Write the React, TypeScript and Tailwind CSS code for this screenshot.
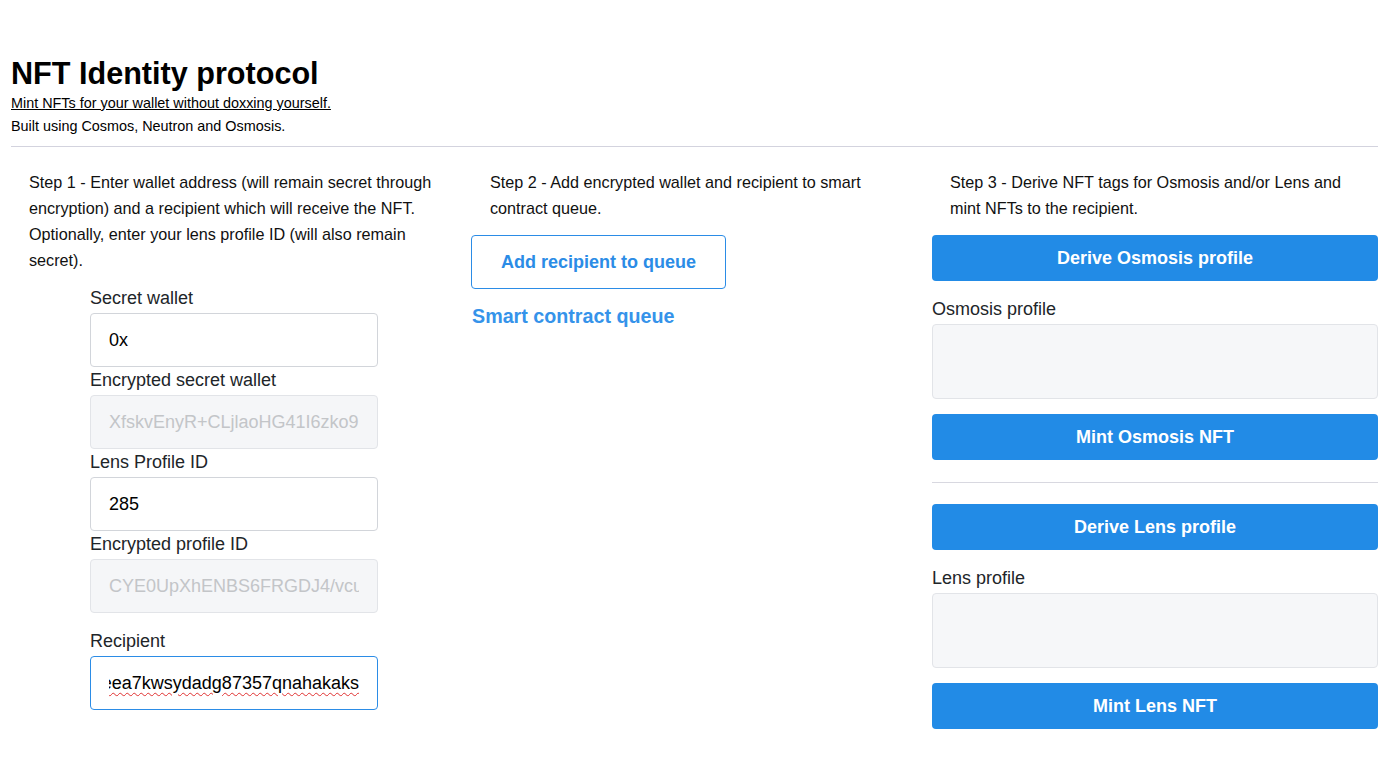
import React from "react";

const font = { fontFamily: '"Liberation Sans", Arial, sans-serif' };

function Field({
  label,
  value,
  disabled,
  focused,
  className = "",
}: {
  label: string;
  value: string;
  disabled?: boolean;
  focused?: boolean;
  className?: string;
}) {
  return (
    <div className={"flex flex-col " + className}>
      <label className="text-[18px] leading-[27px] text-[#212529] mb-[1px]">{label}</label>
      <div
        className={
          "h-[54px] rounded-[4px] border flex items-center pl-[18px] pr-[18px] text-[18px] " +
          (disabled
            ? "bg-[#f5f6f8] border-[#e2e4e8] text-[#c3c5c8]"
            : focused
            ? "bg-white border-[#2b8ce6] text-black"
            : "bg-white border-[#d2d5da] text-black")
        }
      >
        <div className={"w-full overflow-hidden whitespace-nowrap flex " + (focused ? "justify-end" : "justify-start")}>
          {focused ? (
            <span className="shrink-0 underline decoration-wavy decoration-[#e03131] decoration-[1px] underline-offset-[3px]">
              1qzeea7kwsydadg87357qnahakaks
            </span>
          ) : (
            <span className="shrink-0">{value}</span>
          )}
        </div>
      </div>
    </div>
  );
}

function BlueButton({ children }: { children: React.ReactNode }) {
  return (
    <div className="h-[46px] w-full rounded-[4px] bg-[#228be6] text-white font-bold text-[18px] flex items-center justify-center">
      {children}
    </div>
  );
}

export default function App() {
  return (
    <div className="bg-white min-h-[759px] px-[11px] pt-[55px] text-black" style={font}>
      <h1 className="text-[30.6px] font-bold leading-[36px]">NFT Identity protocol</h1>
      <p className="text-[14.4px] leading-[20px] mt-[2px] underline">Mint NFTs for your wallet without doxxing yourself.</p>
      <p className="text-[14.4px] leading-[20px] mt-[3px]">Built using Cosmos, Neutron and Osmosis.</p>
      <div className="h-px bg-[#d3d3de] mt-[10px] w-[1367px]" />

      <div className="grid grid-cols-[446px_447px_446px] gap-x-[14px] mt-[22px]">
        {/* Column 1 */}
        <div className="flex flex-col">
          <p className="pl-[18px] pr-[6px] text-[16.2px] leading-[26px] text-[#111]">
            Step 1 - Enter wallet address (will remain secret through encryption) and a recipient which will receive the
            NFT. Optionally, enter your lens profile ID (will also remain secret).
          </p>
          <div className="w-[288px] mx-auto mt-[12px] flex flex-col">
            <Field label="Secret wallet" value="0x" />
            <Field label="Encrypted secret wallet" value="XfskvEnyR+CLjlaoHG41I6zko9" disabled />
            <Field label="Lens Profile ID" value="285" />
            <Field label="Encrypted profile ID" value="CYE0UpXhENBS6FRGDJ4/vcu" disabled />
            <Field label="Recipient" value="" focused className="mt-[15px]" />
          </div>
        </div>

        {/* Column 2 */}
        <div className="flex flex-col items-start">
          <p className="pl-[19px] pr-[36px] text-[16.2px] leading-[26px] text-[#111]">
            Step 2 - Add encrypted wallet and recipient to smart contract queue.
          </p>
          <div className="mt-[14px] h-[54px] w-[255px] rounded-[4px] border border-[#2b8ce6] bg-white text-[#2b8ce6] font-bold text-[18px] flex items-center justify-center">
            Add recipient to queue
          </div>
          <h3 className="mt-[12px] pl-px text-[19.7px] leading-[30px] font-bold text-[#3593ea]">Smart contract queue</h3>
        </div>

        {/* Column 3 */}
        <div className="flex flex-col">
          <p className="pl-[18px] pr-[26px] text-[16.2px] leading-[26px] text-[#111]">
            Step 3 - Derive NFT tags for Osmosis and/or Lens and mint NFTs to the recipient.
          </p>
          <div className="mt-[14px]">
            <BlueButton>Derive Osmosis profile</BlueButton>
          </div>
          <label className="mt-[15px] text-[18px] leading-[27px] text-[#212529] mb-[1px]">Osmosis profile</label>
          <div className="h-[75px] rounded-[4px] border border-[#e2e4e8] bg-[#f6f7f9]" />
          <div className="mt-[15px]">
            <BlueButton>Mint Osmosis NFT</BlueButton>
          </div>
          <div className="h-px bg-[#d8d8e0] mt-[22px]" />
          <div className="mt-[21px]">
            <BlueButton>Derive Lens profile</BlueButton>
          </div>
          <label className="mt-[15px] text-[18px] leading-[27px] text-[#212529] mb-[1px]">Lens profile</label>
          <div className="h-[75px] rounded-[4px] border border-[#e2e4e8] bg-[#f6f7f9]" />
          <div className="mt-[15px]">
            <BlueButton>Mint Lens NFT</BlueButton>
          </div>
        </div>
      </div>
    </div>
  );
}
